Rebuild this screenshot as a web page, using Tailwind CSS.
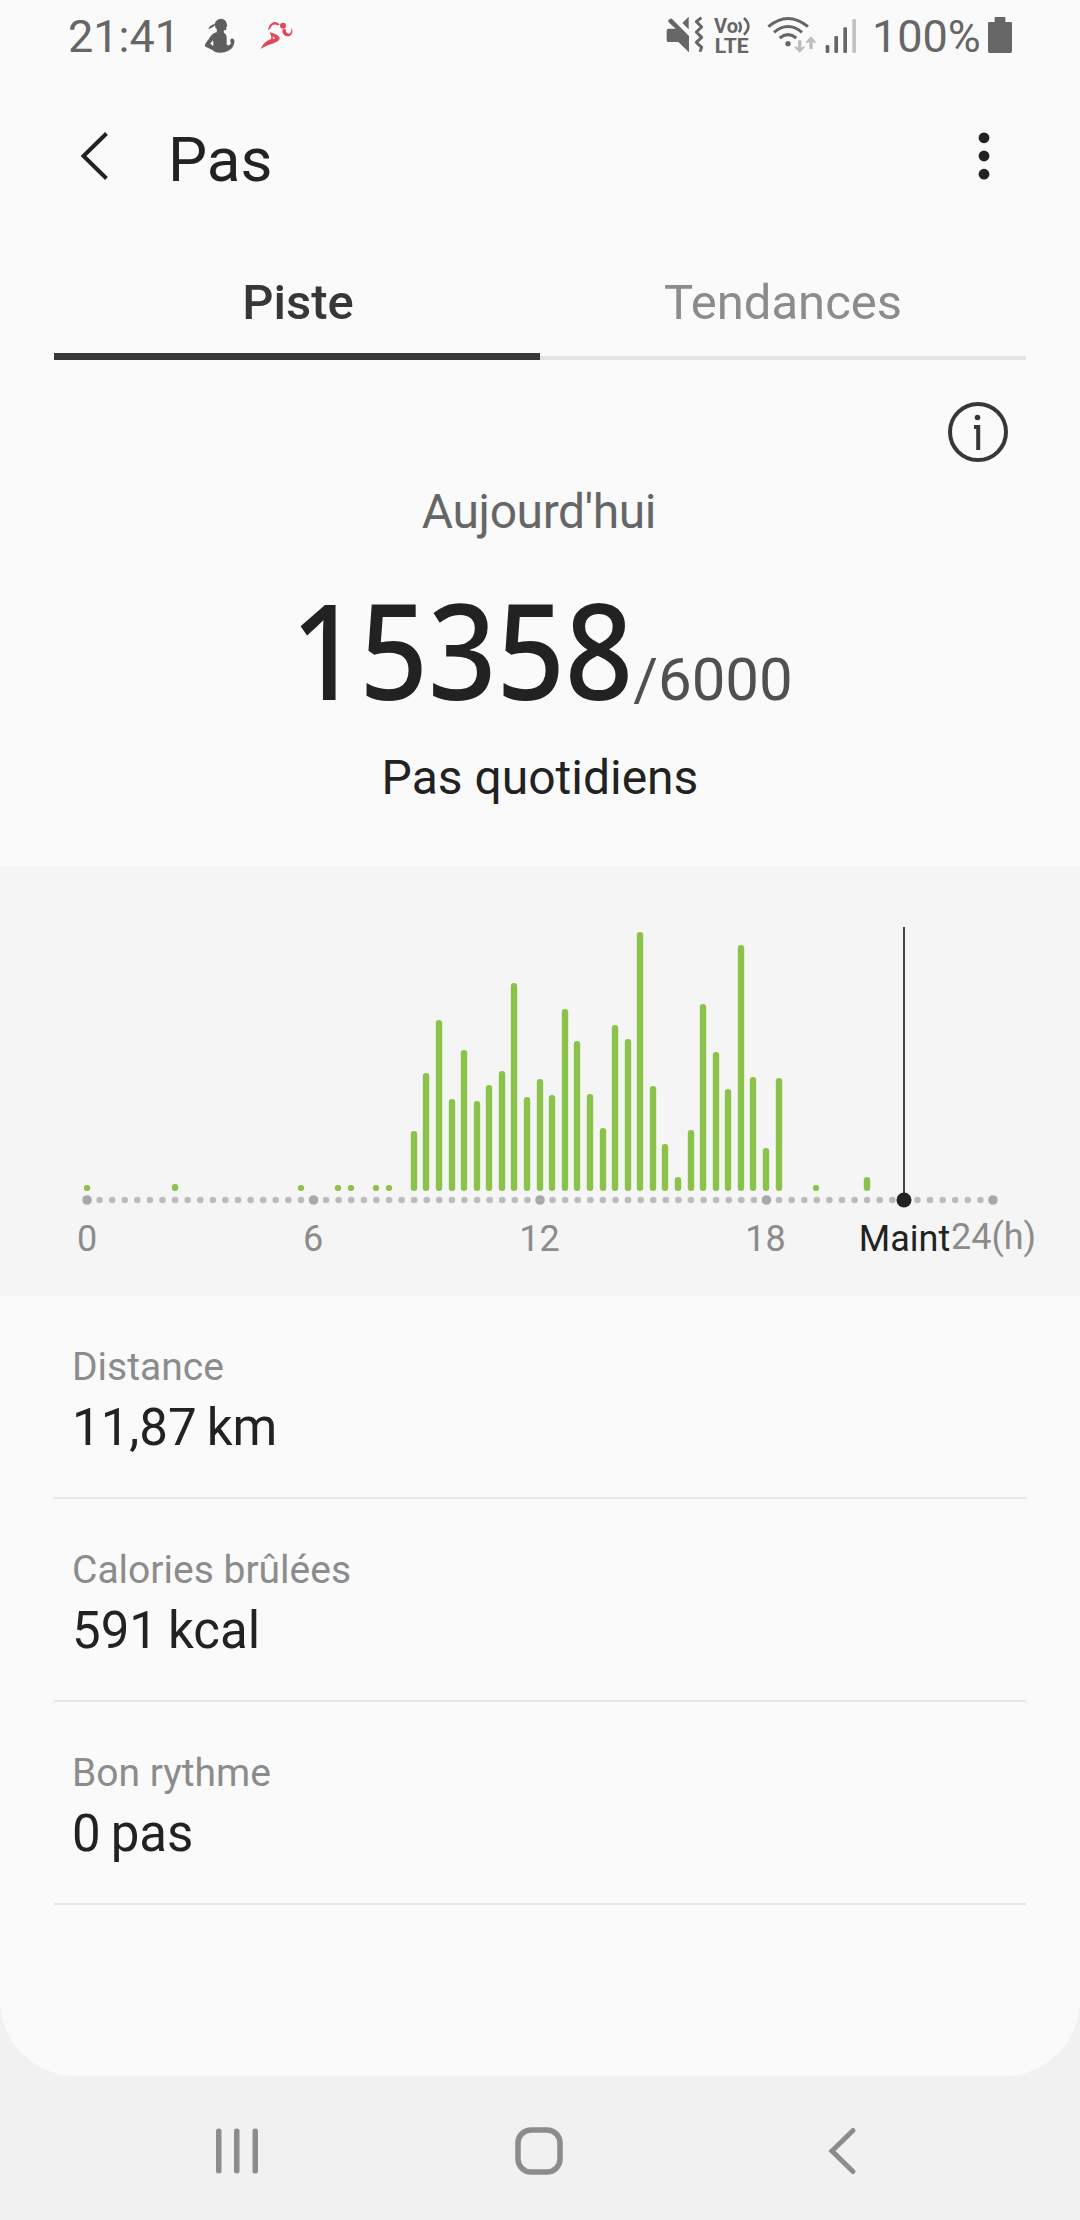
<!DOCTYPE html>
<html lang="fr">
<head>
  <meta charset="UTF-8" />
  <meta name="viewport" content="width=device-width, initial-scale=1.0"/>
  <title>Pas</title>
  <script src="https://cdn.jsdelivr.net/npm/@tailwindcss/browser@4"></script>
</head>
<body class="bg-[#f1f1f1] font-['Roboto',sans-serif] text-[#222222]">
  <div class="w-[1080px] h-[2220px] flex flex-col overflow-hidden">
    <div class="h-[2076px] bg-[#fafafa] rounded-b-[76px]">

      <!-- Status bar -->
      <div class="h-[73px] flex items-center pl-[68px] pr-[66px] text-[#666666]">
        <span class="w-[132px] text-[45px] leading-none">21:41</span>
        <svg class="w-[40px] h-[73px]" viewBox="450 0 120 219" fill="#5e5e5e">
          <path d="M512 56c10 0 18 7 18 16l2 6-3 3v6c0 3-3 4-8 4l1 8c6 3 8 8 8 14v20l5 4 8-6-2-8c-1-6 4-9 9-6 4 3 4 8 2 14-2 8-6 15-14 19-8 6-17 8-27 8-12 0-20-3-24-8l-20-10c-3-2-3-6-1-9l15-21c5-8 11-11 19-13l1-9c-4-3-6-8-6-13-4 5-10 10-20 12 2-7 10-13 19-15 2-9 9-15 18-15z"/>
          <path d="M488 121l-7 10 8 7c2-5 2-11-1-17z" fill="#fafafa"/>
        </svg>
        <svg class="w-[40px] h-[73px] ml-[17px]" viewBox="620 0 120 219" fill="#e6455c">
          <circle cx="698" cy="77" r="9"/>
          <path d="M653 91c2-12 7-22 19-25 6-1 11 2 16 8-4 2-7 2-10 0-9-2-15 3-18 11z"/>
          <path d="M697 88l9-1c0 9 4 14 9 14 6 0 8-7 9-18 4 10 2 20-5 24-11 5-20-1-23-12z"/>
          <path d="M658 97c8 1 18 5 26 11 6 5 5 11-1 15-14 10-32 10-52 24 8-16 17-25 31-29 2-7 0-13-4-21zm9 11c1 4 1 6 0 9l7-1c-1-3-4-6-7-8z" fill-rule="evenodd"/>
        </svg>
        <svg class="w-[220px] h-[73px] ml-auto" viewBox="40 0 660 219" fill="#666666">
          <!-- muted, vibrate -->
          <path d="M53 60l9-5 53 53v49L83 126H53q-5 0-5-5V92q0-6 6-6h21L53 66zM114 50v38L95 69z"/>
          <path d="M152 53l-15 12 16 16-16 15 16 16-16 15 16 15-5 13" fill="none" stroke="#666666" stroke-width="9" stroke-linejoin="round"/>
          <!-- VoLTE -->
          <text x="190" y="98" font-size="60" font-weight="700" textLength="72" lengthAdjust="spacingAndGlyphs">Vo</text>
          <text x="192" y="158" font-size="60" font-weight="700" textLength="102" lengthAdjust="spacingAndGlyphs">LTE</text>
          <path d="M265 66q11 16 0 31M280 54q26 25 0 50" fill="none" stroke="#666666" stroke-width="8"/>
          <!-- wifi -->
          <g fill="none" stroke="#666666" stroke-width="9">
            <path d="M353 80q59-49 119 0M370 97q42-35 84 0M387 114q25-20 50 0"/>
          </g>
          <circle cx="412" cy="131" r="8"/>
          <path d="M442 121h10v22l8-5 3 4-16 16-16-16 3-4 8 5zM476 147h10v-22l8 5 2-4-15-17-16 17 3 4 8-5z" fill="#bdbdbd"/>
          <!-- signal -->
          <rect x="525" y="135" width="11" height="24" rx="4"/>
          <rect x="551" y="108" width="11" height="51" rx="4"/>
          <rect x="578" y="82" width="11" height="77" rx="4"/>
          <rect x="605" y="57" width="11" height="102" rx="4" fill="#c2c2c2"/>
        </svg>
        <span class="w-[114px] text-[45px] leading-none -ml-[12px]">100%</span>
        <svg class="w-[28px] h-[73px]" viewBox="1008 0 84 219" fill="#666666">
          <path d="M1034 51h32v15h16q4 0 4 4v84q0 5-5 5h-62q-5 0-5-5V70q0-4 4-4h16z"/>
        </svg>
      </div>

      <!-- Header -->
      <div class="h-[173px] flex items-center pl-[80px] pr-[76px]">
        <svg class="w-[30px] h-[50px] mb-[7px]" viewBox="0 0 30 50" fill="none" stroke="#222222" stroke-width="4">
          <path d="M26.500 2.500L3.500 25l23 22.500"/>
        </svg>
        <h1 class="ml-[58px] text-[62px] leading-none">Pas</h1>
        <svg class="w-[40px] h-[50px] mb-[7px] ml-auto" viewBox="0 0 40 50" fill="#222222">
          <circle cx="20" cy="6.800" r="5.400"/>
          <circle cx="20" cy="25" r="5.400"/>
          <circle cx="20" cy="43.200" r="5.400"/>
        </svg>
      </div>

      <!-- Tabs -->
      <div class="h-[114px] flex mx-[54px] text-[49px] leading-none">
        <div class="w-1/2 flex items-center justify-center pt-[5px] pl-[2px] border-b-[7px] border-[#373937] font-medium text-[#373737]">Piste</div>
        <div class="w-1/2 flex items-center justify-center pt-[2px] border-b-4 border-[#e3e3e3] text-[#8c8c8c]">Tendances</div>
      </div>

      <!-- Steps of the day -->
      <div class="h-[506px] flex flex-col items-center pt-[42px]">
        <svg class="w-[60px] h-[60px] self-end mr-[72px]" viewBox="0 0 60 60" fill="none" stroke="#373737" stroke-width="4">
          <circle cx="30" cy="30" r="28"/>
          <circle cx="29.500" cy="15.500" r="2.800" fill="#373737" stroke="none"/>
          <path d="M26 25h4.200v23"/>
        </svg>
        <p class="mt-[20px] text-[48px] leading-[60px] tracking-[-0.4px] pr-[2px] text-[#666666]">Aujourd'hui</p>
        <div class="mt-[40px] pl-[4px] flex items-baseline">
          <span class="w-[342px] origin-left scale-x-[0.9] whitespace-nowrap font-['Noto_Sans',sans-serif] font-medium text-[133px] leading-none">15358</span>
          <span class="text-[60px] leading-none text-[#505050]">/6000</span>
        </div>
        <p class="mt-[33px] text-[48px] leading-[60px]">Pas quotidiens</p>
      </div>

      <!-- Steps chart, one slot per 20 minutes -->
      <svg class="block w-[1080px] h-[430px] bg-[#f5f5f5]" viewBox="0 866 1080 430">
        <g id="dots"></g>
        <g id="bars" fill="#8bc34a"></g>
        <rect x="903" y="927" width="2" height="273" fill="#444444"/>
        <circle cx="904" cy="1200" r="7.500" fill="#222222"/>
        <g font-size="36" text-anchor="middle" fill="#8c8c8c">
          <text x="87" y="1250.500">0</text>
          <text x="313" y="1250.500">6</text>
          <text x="539.500" y="1250.500">12</text>
          <text x="765.500" y="1250.500">18</text>
          <text x="904.500" y="1250.500" fill="#222222">Maint</text>
          <text x="993.500" y="1249">24(h)</text>
        </g>
      </svg>

      <!-- Details -->
      <div class="mx-[54px]">
        <div class="h-[203px] pt-[48px] px-[18px] border-b-2 border-[#e6e6e6]">
          <p class="text-[39px] leading-[46px] text-[#8c8c8c]">Distance</p>
          <p class="mt-[8px] text-[51px] leading-[60px]">11,87<span class="ml-[10px]">km</span></p>
        </div>
        <div class="h-[203px] pt-[48px] px-[18px] border-b-2 border-[#e6e6e6]">
          <p class="text-[39px] leading-[46px] text-[#8c8c8c]">Calories brûlées</p>
          <p class="mt-[8px] text-[51px] leading-[60px]">591<span class="ml-[10px]">kcal</span></p>
        </div>
        <div class="h-[203px] pt-[48px] px-[18px] border-b-2 border-[#e6e6e6]">
          <p class="text-[39px] leading-[46px] text-[#8c8c8c]">Bon rythme</p>
          <p class="mt-[8px] text-[51px] leading-[60px]">0<span class="ml-[10px]">pas</span></p>
        </div>
      </div>
    </div>

    <!-- Navigation bar -->
    <div class="h-[144px] flex items-center justify-between pl-[212px] pr-[216px] pt-[6px]">
      <svg class="w-[50px] h-[50px]" viewBox="0 0 50 50" fill="#8c8c8c">
        <rect x="4" y="2.500" width="5.500" height="45" rx="2.500"/>
        <rect x="22" y="2.500" width="5.500" height="45" rx="2.500"/>
        <rect x="40.500" y="2.500" width="5.500" height="45" rx="2.500"/>
      </svg>
      <svg class="w-[50px] h-[50px] mr-[12px]" viewBox="0 0 50 50" fill="none" stroke="#8c8c8c" stroke-width="5.500">
        <rect x="4" y="4" width="42" height="42" rx="13"/>
      </svg>
      <svg class="w-[36px] h-[50px]" viewBox="0 0 36 50" fill="none" stroke="#8c8c8c" stroke-width="5" stroke-linecap="round">
        <path d="M25 4.500L4 25l21 20.500"/>
      </svg>
    </div>
  </div>

  <script>
    // slot index -> bar height in px
    const steps = {
      0: 6, 7: 7, 17: 6, 20: 6, 21: 6, 23: 6, 24: 6,
      26: 60, 27: 118, 28: 171, 29: 92, 30: 141, 31: 90, 32: 106, 33: 120, 34: 208,
      35: 94, 36: 112, 37: 96, 38: 182, 39: 150, 40: 97, 41: 63, 42: 166, 43: 152,
      44: 259, 45: 105, 46: 47, 47: 14, 48: 61, 49: 187, 50: 139, 51: 102, 52: 246,
      53: 114, 54: 43, 55: 113, 58: 6, 62: 14
    };
    const slotX = (i) => 87 + i * 12.583;

    let dots = "";
    for (let i = 0; i <= 72; i++) {
      const big = i % 18 === 0;
      dots += `<circle cx="${slotX(i)}" cy="1200" r="${big ? 4.8 : 3.3}" fill="${big ? "#a9a9a9" : "#bcbcbc"}"/>`;
    }
    document.getElementById("dots").innerHTML = dots;

    let bars = "";
    for (const [i, h] of Object.entries(steps)) {
      const x = Math.round(slotX(i) - 0.4) - 3.2;
      bars += `<rect x="${x}" y="${1191 - h}" width="6.4" height="${h}" rx="3"/>`;
    }
    document.getElementById("bars").innerHTML = bars;
  </script>
</body>
</html>
